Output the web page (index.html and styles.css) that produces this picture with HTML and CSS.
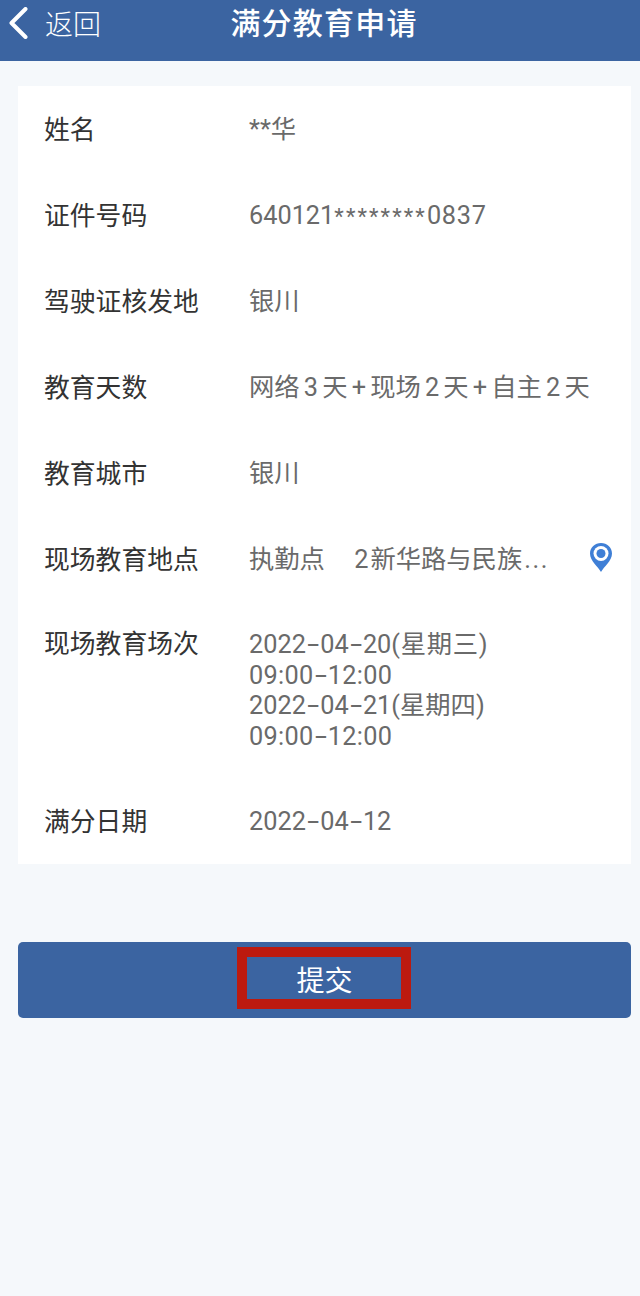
FILE: index.html
```html
<!DOCTYPE html>
<html lang="zh-CN">
<head>
<meta charset="utf-8">
<title>满分教育申请</title>
<link rel="stylesheet" href="styles.css">
</head>
<body>
<header class="topbar">
  <div class="back">
    <svg class="back-icon" viewBox="0 0 20 32" aria-hidden="true"><path d="M17.5 2 L3.5 16 L17.5 30" fill="none" stroke="#fff" stroke-width="4" stroke-linecap="round" stroke-linejoin="round"/></svg>
    <span>返回</span>
  </div>
  <h1 class="title">满分教育申请</h1>
</header>
<main class="content">
  <section class="card">
    <div class="row"><div class="label">姓名</div><div class="value">**华</div></div>
    <div class="row"><div class="label">证件号码</div><div class="value">640121<span class="stars">********</span><span class="id-tail">0837</span></div></div>
    <div class="row"><div class="label">驾驶证核发地</div><div class="value">银川</div></div>
    <div class="row"><div class="label">教育天数</div><div class="value value-days">网络 3 天 + 现场 2 天 + 自主 2 天</div></div>
    <div class="row"><div class="label">教育城市</div><div class="value">银川</div></div>
    <div class="row">
      <div class="label">现场教育地点</div>
      <div class="value value-place"><span class="place-head">执勤点</span>　2<span class="place-tail">新华路与民族</span><span class="dots">...</span></div>
      <svg class="pin" viewBox="0 0 24 30" aria-hidden="true">
        <path d="M12 30 C9 24.5 1 19 1 11.5 C1 5.5 6 1 12 1 C18 1 23 5.5 23 11.5 C23 19 15 24.5 12 30 Z" fill="#3f7fd6"/>
        <circle cx="12" cy="11.5" r="7.5" fill="#fff"/>
        <circle cx="12" cy="11.5" r="4.5" fill="#3f7fd6"/>
      </svg>
    </div>
    <div class="row row-tall">
      <div class="label">现场教育场次</div>
      <div class="value value-lines">
        <div>2022<span class="hy">-</span>04<span class="hy">-</span>20<span class="week">(星期三)</span></div>
        <div class="time">09:00<span class="hy">-</span>12:00</div>
        <div>2022<span class="hy">-</span>04<span class="hy">-</span>21(星期四)</div>
        <div class="time">09:00<span class="hy">-</span>12:00</div>
      </div>
    </div>
    <div class="row"><div class="label">满分日期</div><div class="value">2022<span class="hy">-</span>04<span class="hy">-</span>12</div></div>
  </section>
  <div class="submit">
    <span class="submit-text">提交</span>
    <span class="highlight"></span>
  </div>
</main>
</body>
</html>
```
FILE: styles.css
```css
* { box-sizing: border-box; }
html, body { margin: 0; padding: 0; }
body {
  width: 640px;
  height: 1296px;
  overflow: hidden;
  background: #f5f8fb;
  font-family: "Noto Sans CJK SC", Roboto, sans-serif;
}
.topbar {
  position: relative;
  height: 61px;
  background: #3b64a1;
  color: #fff;
  display: flex;
  align-items: center;
  justify-content: center;
}
.back {
  position: absolute;
  left: 8px;
  top: 7px;
  display: flex;
  align-items: center;
  gap: 17px;
  font-size: 28px;
  line-height: 32px;
  font-weight: 300;
}
.back-icon { width: 20px; height: 32px; display: block; }
.title {
  margin: 0 0 20px 8px;
  font-size: 30px;
  line-height: 36px;
  font-weight: 500;
  letter-spacing: 1.2px;
}
.content { padding: 25px 9px 0 18px; }
.card {
  background: #fff;
  height: 778px;
  padding: 0 0 0 26px;
}
.row {
  display: flex;
  align-items: center;
  height: 86px;
}
.row-tall { height: 177px; align-items: flex-start; padding-top: 25px; margin-bottom: -1px; }
.label {
  width: 205px;
  flex: none;
  padding-bottom: 2px;
  color: #333;
  font-size: 25.8px;
  line-height: 30px;
}
.value {
  padding-top: 2px;
  color: #6a6a6a;
  font-family: Roboto, "Noto Sans CJK SC", sans-serif;
  font-size: 25.3px;
  line-height: 30px;
  white-space: nowrap;
}
.stars { font-size: 22px; letter-spacing: 2.1px; }
.id-tail { letter-spacing: 0.7px; }
.hy {
  display: inline-block;
  width: 14.3px;
  text-align: center;
  transform: scaleX(1.7);
}
.week { letter-spacing: 0.7px; }
.time { letter-spacing: 0.3px; }
.value-days { word-spacing: -2.1px; }
.value-place { flex: 1; }
.place-head { margin-right: 4px; }
.place-tail { margin-left: 2px; }
.dots { letter-spacing: 1.6px; margin-left: 2px; }
.value-lines { line-height: 30.5px; padding-top: 3px; }
.pin { width: 24px; height: 30px; flex: none; margin-right: 18px; margin-bottom: 4px; }
.submit {
  position: relative;
  margin-top: 78px;
  height: 76px;
  border-radius: 5px;
  background: #3b64a1;
  color: #fff;
  font-size: 28px;
  display: flex;
  align-items: center;
  justify-content: center;
}
.submit-text { line-height: 34px; margin-bottom: 2px; }
.highlight {
  position: absolute;
  left: 219px;
  top: 5px;
  width: 174px;
  height: 62px;
  border: 10px solid #bc1a0f;
}
```
